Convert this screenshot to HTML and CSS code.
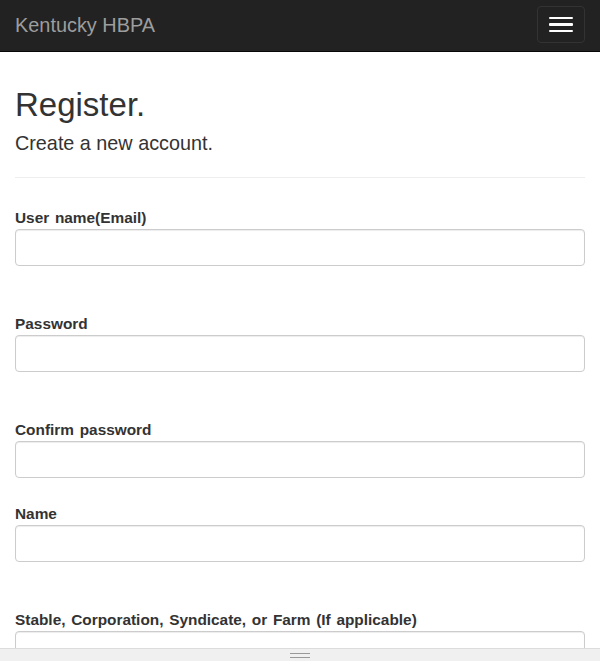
FILE: index.html
```html
<!DOCTYPE html>
<html lang="en">
<head>
<meta charset="utf-8">
<title>Register - Kentucky HBPA</title>
<link rel="stylesheet" href="styles.css">
</head>
<body>
<header class="navbar">
  <a class="brand" href="#">Kentucky HBPA</a>
  <button class="toggle" type="button" aria-label="Toggle navigation">
    <span class="bar"></span>
    <span class="bar"></span>
    <span class="bar"></span>
  </button>
</header>
<main class="container">
  <h2 class="title">Register.</h2>
  <h4 class="subtitle">Create a new account.</h4>
  <hr class="rule">
  <form class="form">
    <div class="group">
      <label class="label" for="email">User name(Email)</label>
      <input class="input" id="email" type="text">
      <span class="validation"></span>
    </div>
    <div class="group">
      <label class="label" for="pw">Password</label>
      <input class="input" id="pw" type="password">
      <span class="validation"></span>
    </div>
    <div class="group">
      <label class="label" for="cpw">Confirm password</label>
      <input class="input" id="cpw" type="password">
    </div>
    <div class="group">
      <label class="label" for="name">Name</label>
      <input class="input" id="name" type="text">
      <span class="validation"></span>
    </div>
    <div class="group">
      <label class="label" for="stable">Stable, Corporation, Syndicate, or Farm (If applicable)</label>
      <input class="input" id="stable" type="text">
    </div>
  </form>
</main>
<div class="grip-bar"><span class="grip"></span></div>
</body>
</html>
```
FILE: styles.css
```css
html, body {
  margin: 0;
  padding: 0;
  background: #fff;
}
body {
  font-family: "Liberation Sans", Arial, sans-serif;
  color: #333;
  font-size: 15.4px;
  line-height: 1.42857;
}
.navbar {
  height: 51px;
  background: #222;
  border-bottom: 1px solid #080808;
  display: flex;
  align-items: flex-start;
  justify-content: space-between;
  padding: 0 15px;
}
.brand {
  color: #9d9d9d;
  text-decoration: none;
  font-size: 19.9px;
  line-height: 22px;
  margin-top: 14px;
}
.toggle {
  margin-top: 6px;
  width: 48px;
  height: 37px;
  background: transparent;
  border: 1px solid #333;
  border-radius: 4px;
  padding: 0;
  display: flex;
  flex-direction: column;
  align-items: center;
  justify-content: center;
  gap: 4.4px;
}
.bar {
  display: block;
  width: 24px;
  height: 2.2px;
  background: #fff;
  border-radius: 1px;
}
.container {
  padding: 0 15px;
}
.title {
  font-size: 33px;
  font-weight: 500;
  line-height: 1.1;
  margin: 35px 0 0;
}
.subtitle {
  font-size: 19.8px;
  font-weight: 500;
  line-height: 1.1;
  margin: 10px 0 0;
}
.rule {
  border: 0;
  border-top: 1px solid #eee;
  margin: 22px 0 0;
}
.form {
  padding-top: 28px;
}
.group {
  margin-bottom: 24px;
}
.label {
  display: block;
  font-weight: bold;
  line-height: 22px;
  padding-top: 1px;
  margin-bottom: 0;
  word-spacing: 1.4px;
}
.input {
  display: block;
  box-sizing: border-box;
  width: 100%;
  height: 37px;
  padding: 6px 12px;
  font-size: 15.4px;
  font-family: inherit;
  color: #555;
  background: #fff;
  border: 1px solid #ccc;
  border-radius: 4px;
  box-shadow: inset 0 1px 1px rgba(0, 0, 0, 0.075);
}
.validation {
  display: block;
  height: 22px;
}
.grip-bar {
  position: fixed;
  left: 0;
  right: 0;
  bottom: 0;
  height: 12px;
  background: #f0f0f0;
  border-top: 1px solid #dcdcdc;
  display: flex;
  align-items: center;
  justify-content: center;
}
.grip {
  display: block;
  width: 20px;
  height: 3px;
  border-top: 1px solid #999;
  border-bottom: 1px solid #999;
}
```
